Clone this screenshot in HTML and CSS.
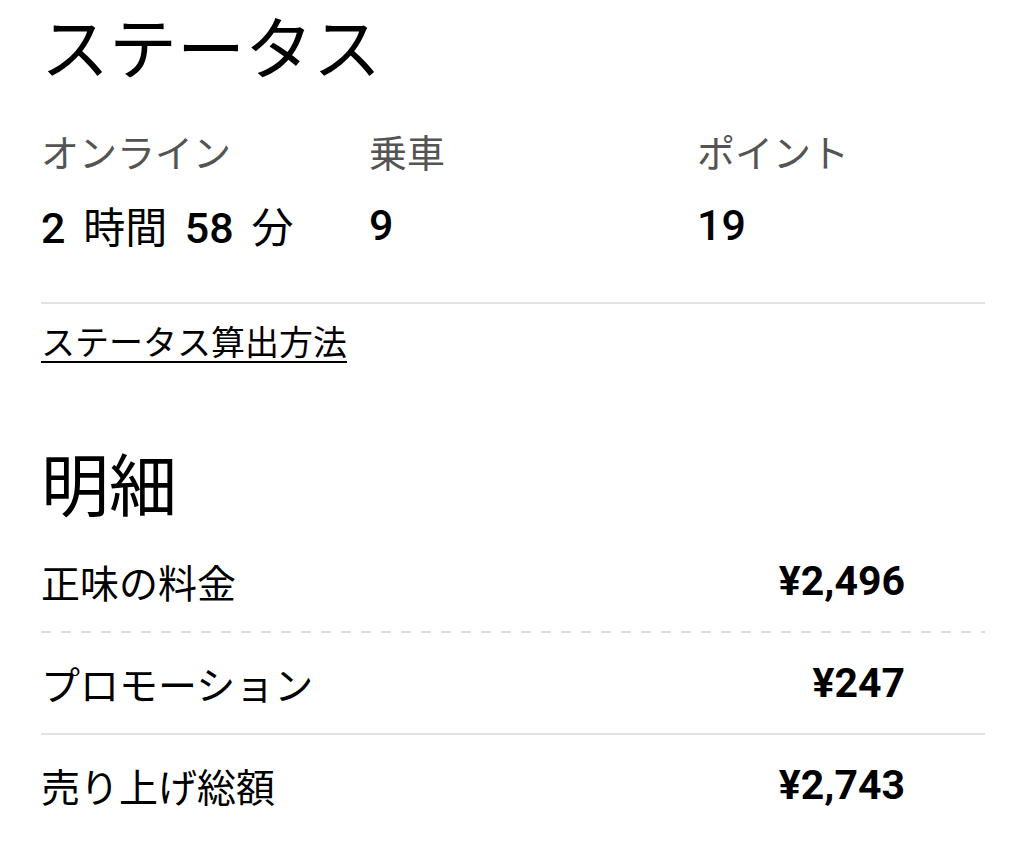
FILE: index.html
```html
<!DOCTYPE html>
<html lang="ja">
<head>
    <meta charset="UTF-8">
    <meta name="viewport" content="width=device-width, initial-scale=1.0">
    <title>ステータス</title>
    <link rel="stylesheet" href="styles.css">
</head>
<body>
    <main class="page">
        <h1 class="heading">ステータス</h1>

        <div class="stats">
            <div class="stat">
                <div class="stat-label">オンライン</div>
                <div class="stat-value">2 <span class="unit">時間</span> 58 <span class="unit">分</span></div>
            </div>
            <div class="stat">
                <div class="stat-label">乗車</div>
                <div class="stat-value">9</div>
            </div>
            <div class="stat">
                <div class="stat-label">ポイント</div>
                <div class="stat-value">19</div>
            </div>
        </div>

        <div class="help">
            <a href="#" class="help-link">ステータス算出方法</a>
        </div>

        <h2 class="heading heading-detail">明細</h2>

        <ul class="breakdown">
            <li class="row row-dashed">
                <span class="row-label">正味の料金</span>
                <span class="row-amount">¥2,496</span>
            </li>
            <li class="row">
                <span class="row-label">プロモーション</span>
                <span class="row-amount">¥247</span>
            </li>
            <li class="row row-total">
                <span class="row-label">売り上げ総額</span>
                <span class="row-amount">¥2,743</span>
            </li>
        </ul>
    </main>
</body>
</html>
```

FILE: styles.css
```css
body {
    margin: 0;
    padding: 0;
    background: #fff;
    color: #000;
    font-family: "Noto Sans CJK JP", "Noto Sans", sans-serif;
}
.page {
    padding: 0 39px 0 41px;
}
.heading {
    margin: 0;
    font-size: 68px;
    font-weight: 400;
    line-height: 90px;
}
.stats {
    display: grid;
    grid-template-columns: 328px 328px 1fr;
    padding-top: 33px;
    padding-bottom: 46px;
    border-bottom: 2px solid #e2e2e2;
}
.stat-label {
    font-size: 38px;
    line-height: 56px;
    color: #545454;
}
.stat-value {
    margin-top: 18px;
    font-family: Roboto, "Noto Sans CJK JP", sans-serif;
    font-size: 43px;
    font-weight: 500;
    line-height: 56px;
    word-spacing: 7px;
}
.unit {
    font-family: "Noto Sans CJK JP", sans-serif;
    font-size: 42px;
    font-weight: 400;
}
.help {
    padding-top: 12px;
}
.help-link {
    color: #000;
    font-size: 34px;
    line-height: 50px;
    text-decoration: underline;
    text-decoration-thickness: 2px;
    text-underline-offset: 6px;
}
.heading-detail {
    margin-top: 71px;
}
.breakdown {
    list-style: none;
    margin: 4px 0 0;
    padding: 0;
}
.row {
    display: flex;
    justify-content: space-between;
    align-items: center;
    height: 100px;
    padding-right: 80px;
    border-bottom: 2px solid #e2e2e2;
}
.row-dashed {
    border-bottom: none;
    padding-bottom: 2px;
    background: repeating-linear-gradient(to right, #dddddd 0 10px, transparent 10px 20px) left bottom / 100% 2px no-repeat;
}
.row-total {
    border-bottom: none;
}
.row-label {
    font-size: 39px;
}
.row-amount {
    font-family: Roboto, "Noto Sans CJK JP", sans-serif;
    font-size: 41px;
    font-weight: 700;
    word-spacing: 0;
}
```
